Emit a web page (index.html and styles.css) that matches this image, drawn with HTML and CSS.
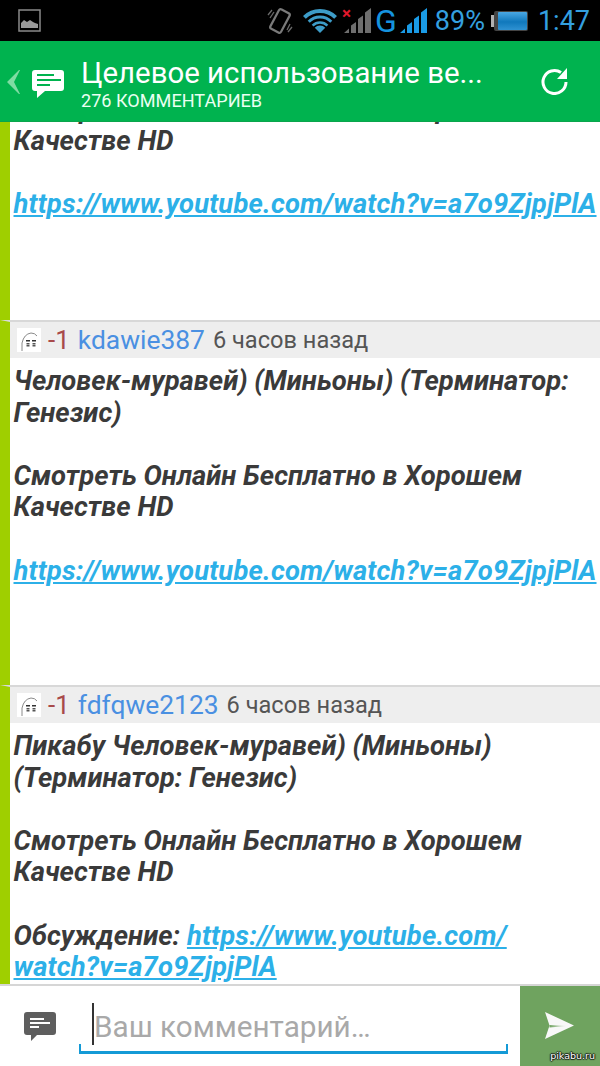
FILE: index.html
```html
<!DOCTYPE html>
<html lang="ru">
<head>
<meta charset="utf-8">
<title>Комментарии</title>
<link rel="stylesheet" href="styles.css">
</head>
<body>
<div class="app">
  <div class="status">
    <svg class="st-img" width="24" height="24" viewBox="0 0 24 24"><rect x="1" y="1" width="21" height="21" fill="none" stroke="#8a8a8a" stroke-width="1.500"/><path d="M3 19v-5l3-3 3 2 3-2 3 2 2 1 3 1v4z" fill="#9a9a9a"/></svg>
    <div class="st-right">
      <svg class="st-rot" width="28" height="30" viewBox="0 0 28 30"><g transform="rotate(28 14 15)"><rect x="8" y="4" width="12" height="22" rx="2" fill="none" stroke="#7a7a7a" stroke-width="2.200"/></g><path d="M2 9l4-5M4 12l4-6M26 21l-4 5M24 18l-3 6" stroke="#6a6a6a" stroke-width="1.300"/></svg>
      <svg class="st-wifi" width="34" height="24" viewBox="0 0 34 24">
        <defs><clipPath id="fan"><polygon points="17,24 0,7 0,0 34,0 34,7"/></clipPath></defs>
        <g clip-path="url(#fan)" fill="none" stroke="#3d9cc8">
          <circle cx="17" cy="24" r="22" stroke-width="4"/>
          <circle cx="17" cy="24" r="16" stroke-width="3"/>
          <circle cx="17" cy="24" r="10.500" stroke-width="2.500"/>
          <circle cx="17" cy="24" r="7.500" fill="#3d9cc8" stroke="none"/>
        </g>
      </svg>
      <div class="st-sig1">
        <span class="st-x">×</span>
        <svg width="27" height="25" viewBox="0 0 27 25"><path d="M0 25L5 20.400V25zM7 25V17.600L12 13.900V25zM14 25V11.100L19 7.400V25zM21 25V4.600L27 0V25z" fill="#6e6e6e"/></svg>
      </div>
      <span class="st-g">G</span>
      <svg class="st-sig2" width="27" height="25" viewBox="0 0 27 25"><path d="M0 25L5 20.400V25zM7 25V17.600L12 13.900V25zM14 25V11.100L19 7.400V25zM21 25V4.600L27 0V25z" fill="#1a9be6"/></svg>
      <span class="st-pct">89%</span>
      <svg class="st-bat" width="37" height="20" viewBox="0 0 37 20">
        <defs><linearGradient id="bl" x1="0" y1="0" x2="0" y2="1"><stop offset="0" stop-color="#4aa8e4"/><stop offset=".55" stop-color="#1078bc"/><stop offset="1" stop-color="#2f92d2"/></linearGradient></defs>
        <rect x="0" y="4" width="3" height="12" fill="#b0b0b0"/><rect x="3" y="0" width="34" height="20" rx="2" fill="#444"/><rect x="7" y="1" width="29" height="18" rx="1" fill="url(#bl)"/>
      </svg>
      <span class="st-time">1:47</span>
    </div>
  </div>

  <header class="bar">
    <svg class="bk" width="14" height="24" viewBox="0 0 14 24"><path d="M12 0L0 12l12 12h1L7 12 13 0z" fill="#7fdca3"/></svg>
    <svg class="logo" width="34" height="30" viewBox="0 0 34 30"><path d="M4 1h26a3 3 0 0 1 3 3v15a3 3 0 0 1-3 3H14l-8 7v-7H4a3 3 0 0 1-3-3V4a3 3 0 0 1 3-3z" fill="#fff"/><path d="M6 6h17M6 11h24M6 16h13" stroke="#00b34f" stroke-width="2"/></svg>
    <div class="titles">
      <div class="title">Целевое использование ве...</div>
      <div class="sub">276 КОММЕНТАРИЕВ</div>
    </div>
    <svg class="ref" width="28" height="28" viewBox="0 0 28 28"><path d="M25 15a11.500 11.500 0 1 1-5-9.500" fill="none" stroke="#fff" stroke-width="3"/><path d="M26 1v11H16z" fill="#fff"/></svg>
  </header>

  <main class="feed">
    <div class="list">
      <article class="c c-first">
        <div class="body">
          <p class="ln">Смотреть Онлайн Бесплатно в Хорошем</p>
          <p class="ln">Качестве HD</p>
          <p class="ln">&nbsp;</p>
          <p class="ln"><a class="lnk">https://www.youtube.com/watch?v=a7o9ZjpjPlA</a></p>
        </div>
      </article>
      <article class="c">
        <div class="head">
          <svg class="ava" width="24" height="24" viewBox="0 0 24 24"><rect width="24" height="24" fill="#fff"/><path d="M5 23V15Q7 6 14 5q4 0 6 3" fill="none" stroke="#8a8a8a" stroke-width="1"/><path d="M9 12h4v1.600H9zM15 12h4v1.600h-4z" fill="#333"/><path d="M11 15v4M17 15v4" stroke="#555" stroke-width="3" stroke-dasharray="1.500 .5"/></svg>
          <span class="score">-1</span>
          <span class="user">kdawie387</span>
          <span class="when">6 часов назад</span>
        </div>
        <div class="body">
          <p class="ln">Человек-муравей) (Миньоны) (Терминатор:</p>
          <p class="ln">Генезис)</p>
          <p class="ln">&nbsp;</p>
          <p class="ln">Смотреть Онлайн Бесплатно в Хорошем</p>
          <p class="ln">Качестве HD</p>
          <p class="ln">&nbsp;</p>
          <p class="ln"><a class="lnk">https://www.youtube.com/watch?v=a7o9ZjpjPlA</a></p>
        </div>
      </article>
      <article class="c">
        <div class="head">
          <svg class="ava" width="24" height="24" viewBox="0 0 24 24"><rect width="24" height="24" fill="#fff"/><path d="M5 23V15Q7 6 14 5q4 0 6 3" fill="none" stroke="#8a8a8a" stroke-width="1"/><path d="M9 12h4v1.600H9zM15 12h4v1.600h-4z" fill="#333"/><path d="M11 15v4M17 15v4" stroke="#555" stroke-width="3" stroke-dasharray="1.500 .5"/></svg>
          <span class="score">-1</span>
          <span class="user">fdfqwe2123</span>
          <span class="when">6 часов назад</span>
        </div>
        <div class="body">
          <p class="ln">Пикабу Человек-муравей) (Миньоны)</p>
          <p class="ln">(Терминатор: Генезис)</p>
          <p class="ln">&nbsp;</p>
          <p class="ln">Смотреть Онлайн Бесплатно в Хорошем</p>
          <p class="ln">Качестве HD</p>
          <p class="ln">&nbsp;</p>
          <p class="ln">Обсуждение: <a class="lnk">https://www.youtube.com/</a></p>
          <p class="ln"><a class="lnk">watch?v=a7o9ZjpjPlA</a></p>
        </div>
      </article>
    </div>
  </main>

  <footer class="compose">
    <svg class="cicon" width="32" height="30" viewBox="0 0 32 30"><path d="M3 0h26a3 3 0 0 1 3 3v17a3 3 0 0 1-3 3H13l-6 6v-6H3a3 3 0 0 1-3-3V3a3 3 0 0 1 3-3z" fill="#5e5e5e"/><path d="M6 7h14M6 11h20M6 15h9" stroke="#fff" stroke-width="2"/></svg>
    <div class="field">
      <span class="cursor"></span>
      <span class="ph">Ваш комментарий…</span>
    </div>
    <div class="send">
      <svg class="plane" width="29" height="27" viewBox="0 0 29 27">
        <defs><linearGradient id="st" x1="0" y1="0" x2="1" y2="0"><stop offset="0" stop-color="#6fa35f"/><stop offset="1" stop-color="#6fa35f" stop-opacity="0"/></linearGradient></defs>
        <path d="M0 0L29 13.500 0 27 4.500 13.500z" fill="#f8f8f8"/><path d="M4.500 13L22 14 4.500 15.500z" fill="url(#st)"/>
      </svg>
      <span class="wm">pikabu.ru</span>
    </div>
  </footer>
</div>
</body>
</html>
```
FILE: styles.css
```css
* { box-sizing: border-box; }
html, body { margin: 0; padding: 0; }
body { background: #fff; font-family: Roboto, "Noto Sans", sans-serif; }
.app { width: 600px; height: 1066px; display: flex; flex-direction: column; overflow: hidden; }

.status { height: 41px; flex: none; background: #000; display: flex; align-items: center; justify-content: space-between; padding: 0 10px 0 18px; }
.st-img { display: block; }
.st-right { display: flex; align-items: center; }
.st-rot { margin-right: 9px; }
.st-wifi { margin-right: 7px; }
.st-sig1 { position: relative; width: 27px; height: 25px; margin-right: 4px; }
.st-x { position: absolute; left: -2px; top: -2px; color: #e0182c; font-size: 17px; font-weight: 700; line-height: 14px; }
.st-sig1 svg { position: absolute; left: 0; top: 0; }
.st-g { color: #1593df; font-size: 32px; line-height: 30px; margin-right: 3px; }
.st-sig2 { margin-right: 8px; }
.st-pct { color: #34a0e0; font-size: 27px; line-height: 30px; margin-right: 6px; }
.st-bat { margin-right: 10px; }
.st-time { color: #34a0e0; font-size: 27px; line-height: 30px; }

.bar { height: 81px; flex: none; background: #00b34f; display: flex; align-items: center; padding: 0 31px 0 7px; color: #fff; border-bottom: 1px solid #0aa54c; }
.bk { margin-right: 10px; margin-top: 1px; }
.logo { margin-right: 16px; margin-top: 6px; }
.titles { flex: 1; min-width: 0; padding-top: 6px; }
.title { font-size: 29.400px; line-height: 34px; white-space: nowrap; }
.sub { font-size: 18.100px; line-height: 22px; color: #eafff2; }
.ref { display: block; }

.feed { flex: 1; min-height: 0; overflow: hidden; border-bottom: 2px solid #d6d6d6; }
.list { margin-top: -36px; }
.c { background: #fff; border-left: 10px solid #9fcf00; height: 365px; overflow: hidden; }
.c-first { height: 234px; }
.c + .c { border-top: 2px solid #d8d8d8; }
.head { height: 36px; background: #eeeeee; display: flex; align-items: center; padding-left: 7px; }
.ava { margin-right: 7px; }
.score { color: #a84a4a; font-size: 26px; margin-right: 8px; }
.user { color: #4a90e2; font-size: 26.400px; margin-right: 8px; }
.when { color: #555; font-size: 23.600px; }
.body { padding: 8px 0 0 3.500px; }
.ln { margin: 0; font-size: 27.400px; line-height: 31.600px; font-weight: 700; font-style: italic; color: #3a3a3a; white-space: nowrap; }
.lnk { color: #2cb0e8; text-decoration: underline; letter-spacing: .17px; }

.compose { height: 80px; flex: none; display: flex; background: #fff; }
.cicon { margin: 26px 0 0 24px; flex: none; }
.field { position: relative; margin: 0 12px 0 23px; flex: 1; height: 68px; border-bottom: 3px solid #149ad6; }
.field::before, .field::after { content: ""; position: absolute; bottom: 0; width: 2px; height: 7px; background: #149ad6; }
.field::before { left: 0; }
.field::after { right: 0; }
.cursor { position: absolute; left: 13px; top: 17px; width: 2px; height: 42px; background: #333; }
.ph { position: absolute; left: 15px; top: 22px; font-size: 29.700px; line-height: 38px; color: #a9a9a9; white-space: nowrap; }
.send { position: relative; width: 80px; flex: none; background: #6fa35f; padding: 26px 0 0 25px; }
.plane { display: block; }
.wm { position: absolute; right: 5px; bottom: 4px; font: 400 9.500px/12px "DejaVu Sans", sans-serif; color: #fff; text-shadow: 1px 0 1px #111, -1px 0 1px #111, 0 1px 1px #111, 0 -1px 1px #111; }
```
